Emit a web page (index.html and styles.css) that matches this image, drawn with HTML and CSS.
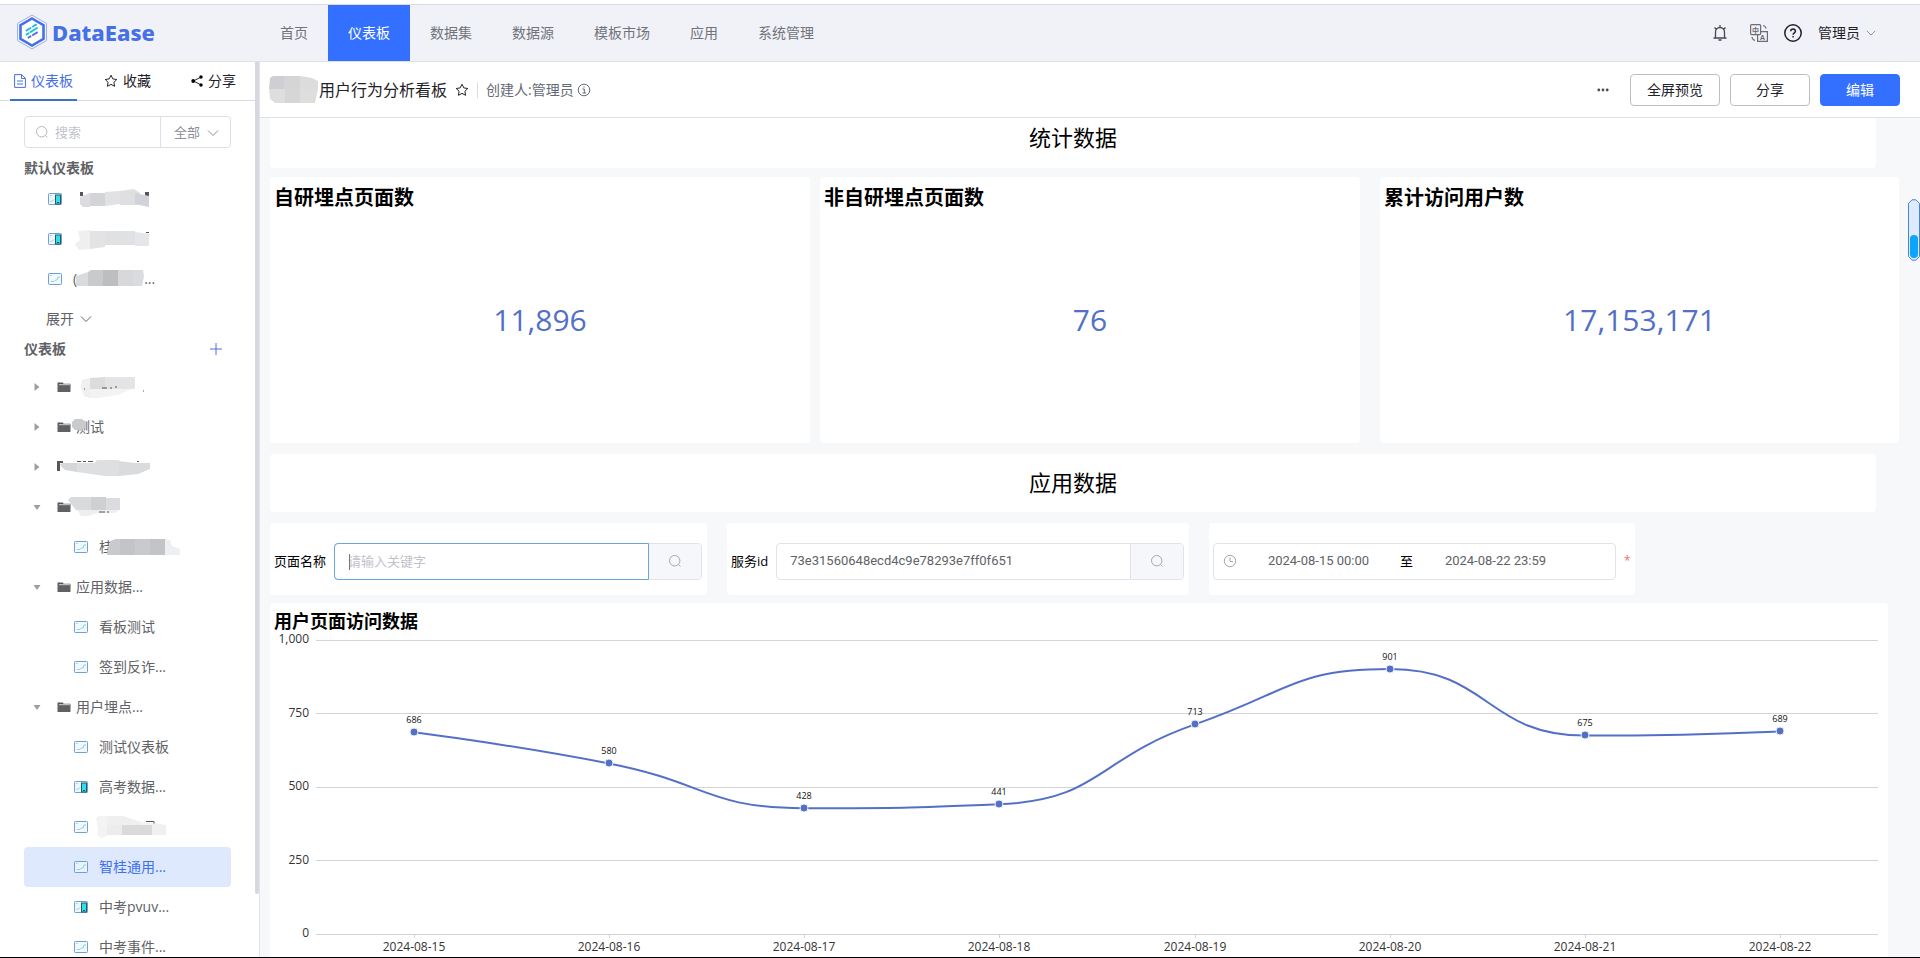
FILE: index.html
```html
<!DOCTYPE html>
<html lang="zh-CN">
<head>
<meta charset="utf-8">
<title>DataEase</title>
<link rel="stylesheet" href="styles.css">
</head>
<body>
<svg class="defs" aria-hidden="true">
  <symbol id="chevron" viewBox="0 0 12 12"><path d="M1 3.5l5 5 5-5" fill="none" stroke="currentColor"/></symbol>
  <symbol id="magnifier" viewBox="0 0 14 14"><circle cx="6.7" cy="6.7" r="5.2" fill="none" stroke="currentColor"/><path d="M10.5 10.5l2 2" stroke="currentColor"/></symbol>
  <symbol id="star" viewBox="0 0 14 14"><path d="M7 1.2l1.8 3.7 4 .6-2.9 2.8.7 4L7 10.4l-3.6 1.9.7-4L1.2 5.5l4-.6z" fill="none" stroke="currentColor" stroke-linejoin="round"/></symbol>
  <symbol id="folder" viewBox="0 0 14 14"><path d="M.5 2.5h5l1.300 1.300h6.700v2H.5z" fill="#55575b"/><path d="M2 4.600h11" stroke="#c4c6c9"/><path d="M.5 5.500h13v6.500H.5z" fill="#5f6165"/></symbol>
  <symbol id="panel" viewBox="0 0 14 12"><rect x=".5" y=".5" width="13" height="11" rx=".8" fill="#edf6fd" fill-opacity=".7" stroke="#6f9fd8"/><path d="M2 2.500h1.500M3 8.500h3l1.500-1.500h1.500l1-3h2" fill="none" stroke="#8fd3cd"/></symbol>
  <symbol id="mobile" viewBox="0 0 14 12"><rect x=".5" y=".5" width="13" height="11" rx=".8" fill="#edf6fd" stroke="#6f9fd8"/><path d="M2 2.500h1.500M2.500 8.500l2-.5 1.500-1.500" fill="none" stroke="#8fd3cd"/><rect x="7.500" y="2" width="5" height="9" fill="#2fe0e8" stroke="#2d5563"/><path d="M9.300 9.500h1.500" stroke="#123"/></symbol>
  <symbol id="right" viewBox="0 0 8 8"><path d="M1.500 0v8l5-4z" fill="#9a9ea6"/></symbol>
  <symbol id="down" viewBox="0 0 8 8"><path d="M.5 2h7L4 7z" fill="#9a9ea6"/></symbol>
</svg>

<header class="topbar">
  <a class="brand" href="#">
    <svg width="32" height="36" viewBox="0 0 32 36" aria-hidden="true">
      <path d="M16 1l14.500 8.500v17L16 35 1.500 26.500v-17z" fill="none" stroke="#9db2ee"/>
      <path d="M16 4.500l11.500 6.700v13.600L16 31.500 4.500 24.800V11.200z" fill="#fff" stroke="#4570e6" stroke-width="2.600"/>
      <g stroke-width="2" stroke-linecap="round"><path d="M10.500 16.500l4-2.500M17 12.500l3-1.800" stroke="#20b8e8"/><path d="M10.500 20.500l2-1.200M14.500 18l6.500-4" stroke="#16c1dc"/><path d="M12.500 23.500l2-1.200M17 21l4-2.500" stroke="#4570e6"/></g>
    </svg>
    <span>DataEase</span>
  </a>
  <nav class="nav">
    <a href="#">首页</a><a href="#" class="on">仪表板</a><a href="#">数据集</a><a href="#">数据源</a><a href="#">模板市场</a><a href="#">应用</a><a href="#">系统管理</a>
  </nav>
  <div class="tools">
    <button class="icon bell" aria-label="通知"><svg width="16" height="18" viewBox="0 0 16 18"><path d="M3.500 14V8a4.500 4.500 0 0 1 9 0v6M1.500 14h13M8 3.500V1M2.500 3.500L4 5M13.500 3.500L12 5M6.500 16h3" fill="none" stroke="#45484e" stroke-width="1.300"/></svg></button>
    <button class="icon lang" aria-label="语言"><svg width="18" height="18" viewBox="0 0 18 18"><g fill="none" stroke="#6b6e75" stroke-width="1.200"><rect x=".6" y=".6" width="10" height="10" rx="1"/><path d="M10.600 7.600h6.800v9.800h-9.800v-6.800"/><path d="M13 1.500c1.800.3 2.800 1.400 3 3M2 13c.2 1.800 1.200 3 3 3.300"/></g><text x="5.600" y="8.500" class="tiny">中</text><text x="12.500" y="15.500" class="tiny">A</text></svg></button>
    <button class="icon help" aria-label="帮助"><svg width="18" height="18" viewBox="0 0 18 18"><circle cx="9" cy="9" r="8.200" fill="none" stroke="#1f2329" stroke-width="1.500"/><path d="M6.700 7.200c0-3 4.700-3 4.700 0 0 1.600-2.300 1.700-2.300 3.500M9.100 12v1.600" fill="none" stroke="#1f2329" stroke-width="1.500"/></svg></button>
    <button class="user">管理员 <svg width="10" height="10"><use href="#chevron"/></svg></button>
  </div>
</header>

<div class="shell">
  <aside class="side">
    <div class="side-body">
      <div class="tabs">
        <button class="tab on"><svg width="12" height="14" viewBox="0 0 12 14"><path d="M.6.6h7l3.800 3.800v9H.6zM7.500.8v3.700h3.700M3 7h6M3 10h6" fill="none" stroke="currentColor"/></svg>仪表板</button>
        <button class="tab"><svg width="14" height="14"><use href="#star"/></svg>收藏</button>
        <button class="tab"><svg width="12" height="12" viewBox="0 0 12 12"><path d="M10 2L2.500 6l7.500 4" fill="none" stroke="currentColor"/><circle cx="10" cy="2" r="1.700"/><circle cx="2.200" cy="6" r="1.900"/><circle cx="10" cy="10" r="1.700"/></svg>分享</button>
      </div>
      <div class="search">
        <label class="find"><svg width="14" height="14"><use href="#magnifier"/></svg><input type="text" placeholder="搜索" aria-label="搜索"></label>
        <div class="scope"><select aria-label="范围"><option>全部</option></select><svg width="12" height="12"><use href="#chevron"/></svg></div>
      </div>
      <h2 class="group">默认仪表板</h2>
      <ul class="list">
        <li class="row fav"><svg width="14" height="12"><use href="#mobile"/></svg><svg class="mask" width="80" height="24" viewBox="0 0 80 24"><path d="M7 5h3v4H7zM72 5h4v5h-4z" fill="#55575b"/><path d="M7 10l10-4v14H10l-3-3z" fill="#dcdce0"/><path d="M17 6h15v13H17z" fill="#d3d4d8"/><path d="M32 5l15-1v13l-15 2z" fill="#e2e2e4"/><path d="M47 4l14-2 6 4v12H47z" fill="#dedfe0"/><path d="M62 6l14 3v11l-14-3z" fill="#d2d3d8"/></svg></li>
        <li class="row fav"><svg width="14" height="12"><use href="#mobile"/></svg><svg class="mask" width="80" height="24" viewBox="0 0 80 24"><path d="M5 4l12-1v19L6 23l-4-6 5-4z" fill="#efefef"/><path d="M17 4h15v16l-15 2z" fill="#e3e3e5"/><path d="M32 4h30v14H32z" fill="#e0e1e3"/><path d="M62 5l14 2v12H62z" fill="#e5e6e9"/><path d="M73 5h3v1h-3z" fill="#555"/></svg></li>
        <li class="row fav"><svg width="14" height="12"><use href="#panel"/></svg><span class="clip zero">(</span><svg class="mask" width="68" height="24" viewBox="0 0 68 24"><path d="M0 9l12-4v14H0z" fill="#dadbdc"/><path d="M12 5l3-2h12v16H12z" fill="#c9cacc"/><path d="M27 3h15v16H27z" fill="#bdbec0"/><path d="M42 3h15v16H42z" fill="#d8d8da"/><path d="M57 3h10l1 6-2 10h-9z" fill="#dadae1"/></svg><span>...</span></li>
      </ul>
      <button class="more">展开 <svg width="12" height="12"><use href="#chevron"/></svg></button>
      <div class="group-row"><h2 class="group">仪表板</h2><button class="icon add" aria-label="新建"><svg width="12" height="12" viewBox="0 0 12 12"><path d="M6 0v12M0 6h12" stroke="#4c6fe0"/></svg></button></div>
      <ul class="list">
        <li class="row dir"><svg width="8" height="8"><use href="#right"/></svg><svg width="14" height="14"><use href="#folder"/></svg><svg class="mask" width="80" height="26" viewBox="0 0 80 26"><path d="M6 6l8-2v20l-6-2-3-8z" fill="#f0f0f0"/><path d="M14 4l15-1v12H14z" fill="#dcdcde"/><path d="M29 3h30v12H29z" fill="#e4e4e6"/><path d="M14 15h42l-14 6-20 3h-8z" fill="#f3f3f3"/><path d="M26 14h5M34 14h2M39 13h2M8 15h1M67 17h1" stroke="#555"/></svg></li>
        <li class="row dir"><svg width="8" height="8"><use href="#right"/></svg><svg width="14" height="14"><use href="#folder"/></svg><span class="over">测试<svg class="blot" width="14" height="12" viewBox="0 0 14 12"><path d="M3 0h7l4 3v5l-4 3H3L0 8V3z" fill="#c9cacb"/></svg></span></li>
        <li class="row dir"><svg width="8" height="8"><use href="#right"/></svg><svg class="mask" width="94" height="24" viewBox="0 0 94 24"><path d="M0 6h6v2H3v8H0z" fill="#55575b"/><path d="M20 6.500h4M26 6.500h3M31 6.500h5M80 6.500h2" stroke="#55575b"/><path d="M3 10l2-2h15v9l-12-2z" fill="#d6d7d9"/><path d="M20 8h18l2-3h22v16H48l-28-4z" fill="#dedfe0"/><path d="M62 6l15 2h16v6l-12 5-19 2z" fill="#dadbdd"/></svg></li>
        <li class="row dir"><svg width="8" height="8"><use href="#down"/></svg><svg width="14" height="14"><use href="#folder"/></svg><svg class="mask lead" width="54" height="24" viewBox="0 0 54 24"><path d="M1 5l3-3h20v13H9z" fill="#d9dadb"/><path d="M24 2h15v13H24z" fill="#cfd0d2"/><path d="M39 3h14v12H39z" fill="#dbdce0"/><path d="M10 15h42l-4 3H30l-8 3h-8z" fill="#efefef"/><path d="M32 17h6M40 17h2" stroke="#555"/></svg></li>
        <li class="row leaf"><svg width="14" height="12"><use href="#panel"/></svg><span class="clip">桂</span><svg class="mask" width="74" height="24" viewBox="0 0 74 24"><path d="M0 19l3-13 6-2h4v16H0z" fill="#c9cacc"/><path d="M13 4h15v16H13z" fill="#c3c4c7"/><path d="M28 4h15v16H28z" fill="#c9cacc"/><path d="M43 4h15v16H43z" fill="#c3c4c7"/><path d="M58 4l5 1 2 6 8 3v6H58z" fill="#eeeff2"/></svg></li>
        <li class="row dir"><svg width="8" height="8"><use href="#down"/></svg><svg width="14" height="14"><use href="#folder"/></svg><span>应用数据...</span></li>
        <li class="row leaf"><svg width="14" height="12"><use href="#panel"/></svg><span>看板测试</span></li>
        <li class="row leaf"><svg width="14" height="12"><use href="#panel"/></svg><span>签到反诈...</span></li>
        <li class="row dir"><svg width="8" height="8"><use href="#down"/></svg><svg width="14" height="14"><use href="#folder"/></svg><span>用户埋点...</span></li>
        <li class="row leaf"><svg width="14" height="12"><use href="#panel"/></svg><span>测试仪表板</span></li>
        <li class="row leaf"><svg width="14" height="12"><use href="#mobile"/></svg><span>高考数据...</span></li>
        <li class="row leaf"><svg width="14" height="12"><use href="#panel"/></svg><svg class="mask lead" width="70" height="24" viewBox="0 0 70 24"><path d="M0 3l3-2h8v20l-6 2-4-3 1-6z" fill="#f3f3f3"/><path d="M11 1h16l12 4 7 5H11z" fill="#efeff0"/><path d="M11 10h15v10H11z" fill="#ececed"/><path d="M39 5l12 3h8l11 2H46z" fill="#f3f3f4"/><path d="M26 10h30v10H26z" fill="#dadadb"/><path d="M56 9l14 1v10H56z" fill="#f0f0f3"/><path d="M50 6.500h8v2" fill="none" stroke="#55575b"/></svg></li>
        <li class="row leaf sel"><svg width="14" height="12"><use href="#panel"/></svg><span>智桂通用...</span></li>
        <li class="row leaf"><svg width="14" height="12"><use href="#mobile"/></svg><span>中考pvuv...</span></li>
        <li class="row leaf"><svg width="14" height="12"><use href="#panel"/></svg><span>中考事件...</span></li>
      </ul>
    </div>
    <div class="track"><div class="thumb"></div></div>
  </aside>

  <main class="main">
    <div class="titlebar">
      <svg width="50" height="28" viewBox="0 0 50 28" aria-hidden="true"><path d="M1 2l3-2h11v13H0z" fill="#cfced2"/><path d="M15 0h16v13H15z" fill="#d5d4d6"/><path d="M31 0l12 2 6 3v8H31z" fill="#dcdcdc"/><path d="M0 13h16v14H6l-5-4z" fill="#dededf"/><path d="M16 13h15v14H16z" fill="#d6d6d6"/><path d="M31 13h18l-3 14H31z" fill="#dededc"/></svg>
      <h1>用户行为分析看板</h1>
      <button class="icon fav-btn" aria-label="收藏"><svg width="14" height="14"><use href="#star"/></svg></button>
      <span class="creator">创建人:管理员</span>
      <svg width="14" height="14" viewBox="0 0 14 14" class="info"><circle cx="7" cy="7" r="5.800" fill="none" stroke="currentColor"/><path d="M5.500 6h1.800v4M5.500 10h3.500M7 3.300v1.300" fill="none" stroke="currentColor"/></svg>
      <div class="actions">
        <button class="icon dots" aria-label="更多"><svg width="12" height="4" viewBox="0 0 12 4" fill="#4b4e55"><circle cx="1.800" cy="2" r="1.400"/><circle cx="6" cy="2" r="1.400"/><circle cx="10.200" cy="2" r="1.400"/></svg></button>
        <button class="btn wide">全屏预览</button>
        <button class="btn">分享</button>
        <button class="btn primary">编辑</button>
      </div>
    </div>

    <div class="canvas">
      <div class="banner first">统计数据</div>
      <div class="stats">
        <section class="card stat"><h3>自研埋点页面数</h3><p>11,896</p></section>
        <section class="card stat"><h3>非自研埋点页面数</h3><p>76</p></section>
        <section class="card stat third"><h3>累计访问用户数</h3><p>17,153,171</p></section>
      </div>
      <div class="banner">应用数据</div>
      <form class="filters">
        <div class="card filter">
          <label for="page">页面名称</label>
          <div class="combo focus"><input id="page" type="text" placeholder="请输入关键字"><i class="caret"></i><button type="button" aria-label="查询页面"><svg width="14" height="14"><use href="#magnifier"/></svg></button></div>
        </div>
        <div class="card filter">
          <label for="service">服务id</label>
          <div class="combo"><input id="service" type="text" value="73e31560648ecd4c9e78293e7ff0f651"><button type="button" aria-label="查询服务"><svg width="14" height="14"><use href="#magnifier"/></svg></button></div>
        </div>
        <div class="card filter date">
          <div class="range"><svg width="14" height="14" viewBox="0 0 14 14"><circle cx="7" cy="7" r="5.700" fill="none" stroke="currentColor"/><path d="M7 3.500V7.500h3" fill="none" stroke="currentColor"/></svg><input type="text" aria-label="开始时间" value="2024-08-15 00:00"><span>至</span><input type="text" aria-label="结束时间" value="2024-08-22 23:59"></div>
          <span class="req">*</span>
        </div>
      </form>
      <section class="card chart">
        <h3>用户页面访问数据</h3>
        <svg viewBox="0 0 1618 340" role="img" aria-label="用户页面访问数据">
          <g class="grid"><path d="M46 12.500h1562M46 85.500h1562M46 159.500h1562M46 232.500h1562"/><path d="M46 306.500h1562M144.500 306v4M339.500 306v4M534.500 306v4M729.500 306v4M925.500 306v4M1120.500 306v4M1315.500 306v4M1510.500 306v4"/></g>
          <g class="axis end"><text x="39" y="15">1,000</text><text x="39" y="89">750</text><text x="39" y="162">500</text><text x="39" y="236">250</text><text x="39" y="309">0</text></g>
          <g class="axis mid"><text x="144" y="323">2024-08-15</text><text x="339" y="323">2024-08-16</text><text x="534" y="323">2024-08-17</text><text x="729" y="323">2024-08-18</text><text x="925" y="323">2024-08-19</text><text x="1120" y="323">2024-08-20</text><text x="1315" y="323">2024-08-21</text><text x="1510" y="323">2024-08-22</text></g>
          <path class="line" d="M144 104.300C144 104.300 241.600 116.500 339 135.500C437 154.500 437 180.200 534 180.200C632 180.200 635.500 180.200 729 176.300C830.600 172.100 825.500 130.800 925 96.400C1020.700 63.300 1023 41.100 1120 41.100C1220 41.100 1216 107.600 1315 107.600C1413 107.600 1510 103.400 1510 103.400"/>
          <g class="dots-g"><circle cx="144" cy="104" r="4"/><circle cx="339" cy="135" r="4"/><circle cx="534" cy="180" r="4"/><circle cx="729" cy="176" r="4"/><circle cx="925" cy="96" r="4"/><circle cx="1120" cy="41" r="4"/><circle cx="1315" cy="107" r="4"/><circle cx="1510" cy="103" r="4"/></g>
          <g class="val"><text x="144" y="95">686</text><text x="339" y="126">580</text><text x="534" y="171">428</text><text x="729" y="167">441</text><text x="925" y="87">713</text><text x="1120" y="32">901</text><text x="1315" y="98">675</text><text x="1510" y="94">689</text></g>
        </svg>
      </section>
    </div>
    <div class="gauge" aria-hidden="true"><svg width="12" height="62" viewBox="0 0 12 62"><path d="M.5 4.500L4 .8h4l3.500 3.700v53L8 61.200H4L.5 57.500z" fill="#deeafd" stroke="#4a84d8"/><rect x="2" y="36" width="8" height="23" rx="4" fill="#0ba5fb"/></svg></div>
  </main>
</div>
</body>
</html>
```
FILE: styles.css
```css
* { box-sizing: border-box; }
body {
  margin: 0;
  height: 100vh;
  padding-top: 4px;
  display: flex;
  flex-direction: column;
  overflow: hidden;
  border-bottom: 1px solid #000;
  background: #fff;
  color: #1f2329;
  font: 14px/20px "Open Sans", "Noto Sans CJK SC", sans-serif;
}
button, input, select { font: inherit; color: inherit; margin: 0; padding: 0; border: 0; background: none; outline: 0; }
button { cursor: pointer; }
h1, h2, h3, p, ul { margin: 0; padding: 0; font-weight: 400; }
a { color: inherit; text-decoration: none; }
svg { display: block; flex: none; }
.defs { position: absolute; width: 0; height: 0; }
.icon { display: flex; align-items: center; justify-content: center; }

.topbar { flex: none; display: flex; height: 58px; background: #f1f2f7; border-top: 1px solid #dcdde0; border-bottom: 1px solid #e0e1e5; }
.brand { display: flex; align-items: center; gap: 4px; width: 260px; padding-left: 16px; padding-bottom: 2px; font: 800 22px/30px "Noto Sans", sans-serif; color: #4570e6; }
.nav { display: flex; }
.nav a { display: flex; align-items: center; padding: 0 20px; color: #70737a; }
.nav a.on { background: #3370ff; color: #fff; }
.tools { margin-left: auto; display: flex; align-items: center; padding-right: 44px; }
.lang { margin-left: 22px; }
.help { margin-left: 16px; }
.user { display: flex; align-items: center; gap: 6px; margin-left: 16px; }
.user svg { color: #7b7e85; }
.tiny { font-size: 7px; font-weight: 700; text-anchor: middle; fill: #6b6e75; }

.shell { flex: 1; min-height: 0; display: flex; }
.side { flex: none; width: 260px; display: flex; overflow: hidden; border-right: 1px solid #e3e4e8; }
.side-body { flex: 1; min-width: 0; color: #606266; }
.track { width: 4px; }
.thumb { height: 93%; background: #d6d7e0; border-radius: 0 0 2px 2px; }
.tabs { display: flex; gap: 15px; height: 39px; padding-left: 10px; border-bottom: 1px solid #d9dbe0; color: #1f2329; }
.tab { display: flex; align-items: center; justify-content: center; gap: 5px; height: 39px; width: 67px; flex: none; border-bottom: 2px solid transparent; }
.tab + .tab { width: 71px; }
.tab.on { color: #4570e6; border-color: #3a75c4; }
.search { display: flex; height: 32px; margin: 15px 24px 0; border: 1px solid #dcdfe6; border-radius: 4px; }
.find { flex: 1; min-width: 0; display: flex; align-items: center; gap: 6px; padding-left: 10px; color: #b4b8c0; }
.find input { width: 100%; min-width: 0; font-size: 13px; }
::placeholder { color: #bfc3cb; opacity: 1; }
.scope { position: relative; width: 70px; border-left: 1px solid #dcdfe6; color: #8c8f96; }
.scope select { appearance: none; width: 100%; height: 30px; padding-left: 13px; font-size: 13px; }
.scope svg { position: absolute; right: 11px; top: 10px; pointer-events: none; }
.group { padding-left: 24px; font-size: 14px; font-weight: 700; line-height: 22px; }
.side-body > .group { margin-top: 9px; }
.list { list-style: none; }
.row { display: flex; align-items: center; height: 40px; margin: 0 24px; border-radius: 4px; white-space: nowrap; }
.row.fav { padding-left: 24px; gap: 11px; }
.row.dir { padding-left: 9px; }
.row.dir > svg + svg { margin-left: 16px; }
.row.dir > svg + span { margin-left: 5px; }
.row.dir > svg:first-child + .mask { margin-left: 16px; }
.row.dir > .mask.lead { margin-left: -4px; }
.row.dir > svg:nth-child(2) + .mask:not(.lead) { margin-left: 5px; }
.row.leaf { padding-left: 50px; gap: 11px; }
.row .mask { position: relative; }
.row .clip + .mask { margin-left: -17px; }
.row .zero + .mask { margin-left: -12px; }
.row .mask + span { margin-left: -11px; }
.row.leaf .lead { margin-left: -3px; }
.row.sel { background: #dfe9fe; color: #3d6ff0; }
.over { position: relative; }
.blot { position: absolute; left: -4px; top: 2px; }
.more { display: flex; align-items: center; gap: 6px; height: 40px; padding-left: 46px; }
.group-row { display: flex; align-items: center; justify-content: space-between; height: 28px; padding-right: 33px; margin-top: -4px; margin-bottom: 4px; }

.main { flex: 1; min-width: 0; position: relative; display: flex; flex-direction: column; background: #f7f8fa; }
.titlebar { flex: none; display: flex; align-items: center; height: 56px; padding: 0 20px 0 9px; background: #fff; border-bottom: 1px solid #e0e1e4; }
h1 { font-size: 16px; line-height: 24px; }
.fav-btn { margin-left: 8px; }
.creator { margin-left: 8px; padding-left: 8px; border-left: 1px solid #dcdee2; line-height: 16px; color: #646a73; }
.info { margin-left: 3px; color: #646a73; }
.actions { margin-left: auto; display: flex; align-items: center; gap: 10px; }
.dots { margin-right: 11px; }
.btn { width: 80px; height: 32px; border: 1px solid #bbbfc4; border-radius: 4px; background: #fff; }
.btn.wide { width: 90px; }
.btn.primary { background: #3370ff; border-color: #3370ff; color: #fff; }

.canvas { flex: 1; min-height: 0; overflow: hidden; padding: 0 20px 0 10px; }
.banner { display: flex; align-items: center; justify-content: center; height: 58px; padding-bottom: 2px; margin-right: 24px; background: #fff; border-radius: 4px; font-size: 22px; color: #000; }
.banner.first { height: 50px; padding-bottom: 12px; border-radius: 0 0 4px 4px; }
.card { background: #fff; border-radius: 4px; color: #000; }
.stats { display: grid; grid-template-columns: 540fr 540fr 529fr; gap: 10px; margin: 9px 0 11px; padding-right: 1px; }
.stat { height: 266px; display: flex; flex-direction: column; padding: 7px 4px 16px; }
.stat.third { margin-left: 10px; }
.stat h3 { font-size: 20px; font-weight: 700; line-height: 28px; }
.stat p { flex: 1; display: flex; align-items: center; justify-content: center; font-size: 30px; color: #5470c6; }
.filters { display: grid; grid-template-columns: 437fr 462fr 426fr 245fr; gap: 20px; margin: 11px 0 8px; font-size: 13px; }
.filter { min-width: 0; display: flex; align-items: center; gap: 8px; height: 72px; padding: 4px 5px 0 4px; }
.filter label { flex: none; }
.combo { position: relative; flex: 1; min-width: 0; display: flex; height: 37px; border: 1px solid #e0e3ea; border-radius: 4px; color: #606266; }
.combo input { flex: 1; min-width: 0; padding-left: 13px; border-right: 1px solid #e0e3ea; }
.combo button { width: 52px; display: flex; align-items: center; justify-content: center; background: #f5f7fa; border-radius: 0 3px 3px 0; color: #a3a7af; }
.combo.focus input { margin: -1px 0 -1px -1px; border: 1px solid #6aa6dc; border-radius: 4px 0 0 4px; }
#service, .range input { font-family: Roboto, sans-serif; }
.caret { position: absolute; left: 14px; top: 10px; width: 1px; height: 16px; background: #777; }
.range { flex: 1; min-width: 0; display: flex; align-items: center; height: 37px; padding: 0 38px 0 9px; border: 1px solid #e0e3ea; border-radius: 4px; color: #606266; }
.range svg { color: #a3a7af; }
.range input { flex: 1; min-width: 0; text-align: center; }
.range span { width: 14px; color: #000; }
.req { color: #f56c6c; width: 6px; font-size: 12px; }
.filter.date { padding-right: 5px; }
.chart { margin-right: 12px; padding-top: 5px; }
.chart h3 { font-size: 18px; font-weight: 700; line-height: 26px; height: 20px; padding-left: 4px; }
.chart svg { width: 100%; height: auto; }
.grid path { stroke: #d3d4d6; }
.axis text { font-size: 12px; fill: #333; }
.end { text-anchor: end; }
.mid, .val { text-anchor: middle; }
.val text { font-size: 9px; fill: #111; }
.line { fill: none; stroke: #5470c6; stroke-width: 2; }
.dots-g circle { fill: #5470c6; stroke: #e9effc; stroke-width: 1; }
.gauge { position: absolute; right: 0; top: 137px; }
```
